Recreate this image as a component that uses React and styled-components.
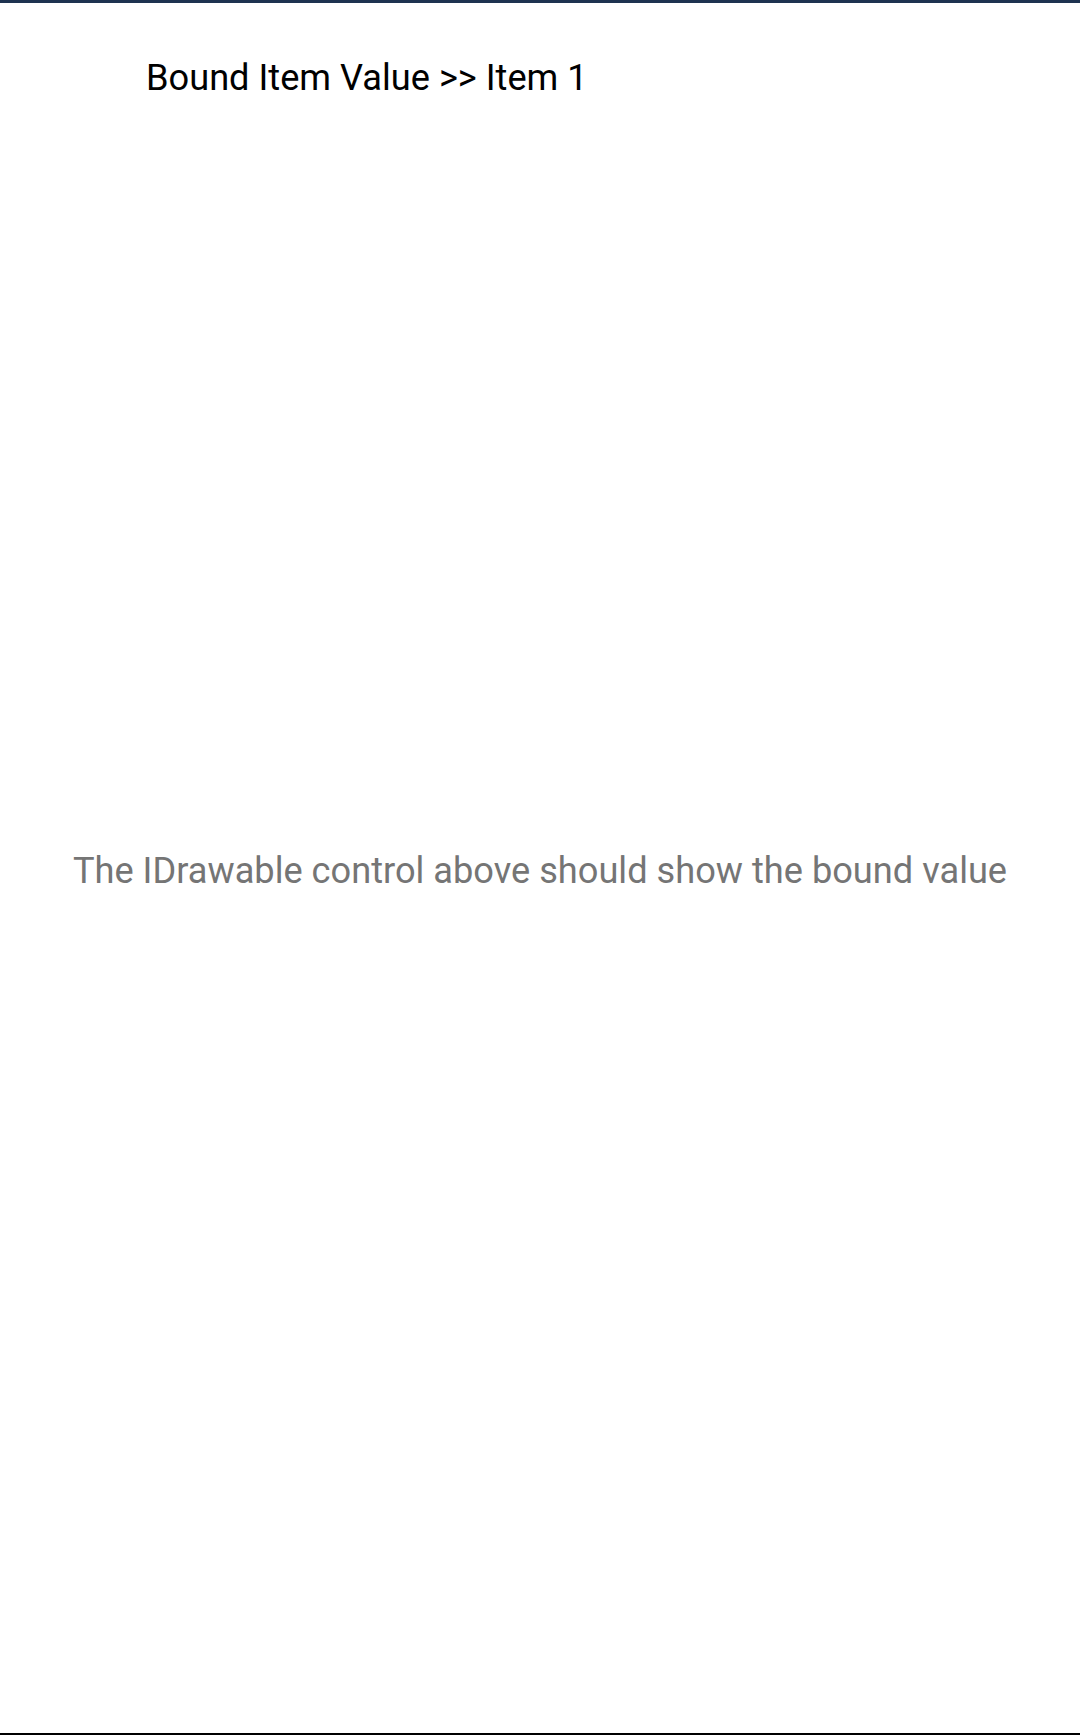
import React from 'react';
import styled, { createGlobalStyle } from 'styled-components';

const GlobalStyle = createGlobalStyle`
	html, body {
		margin: 0;
		padding: 0;
		background: #ffffff;
	}
	body {
		font-family: Roboto, "Liberation Sans", sans-serif;
	}
`;

const Page = styled.div`
	width: 1080px;
	height: 1735px;
	display: flex;
	flex-direction: column;
	background: #ffffff;
	box-sizing: border-box;
	border-bottom: 2px solid #000000;
`;

const TopBar = styled.div`
	height: 3px;
	background-color: #1e3350;
	flex-shrink: 0;
`;

const BoundLabel = styled.div`
	font-size: 36.2px;
	line-height: 42px;
	color: #000000;
	padding: 54px 0 0 146px;
`;

const Canvas = styled.div`
	height: 751px;
`;

const Caption = styled.div`
	font-size: 36.2px;
	line-height: 42px;
	color: #757575;
	text-align: center;
`;

const App = () => {
	return (
		<>
			<GlobalStyle />
			<Page>
				<TopBar />
				<BoundLabel>Bound Item Value &gt;&gt; Item 1</BoundLabel>
				<Canvas />
				<Caption>The IDrawable control above should show the bound value</Caption>
			</Page>
		</>
	);
};

export default App;
